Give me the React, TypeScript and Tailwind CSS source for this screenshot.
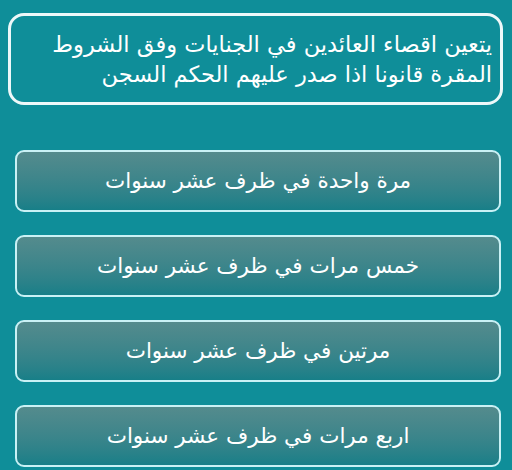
const answers = [
  'مرة واحدة في ظرف عشر سنوات',
  'خمس مرات في ظرف عشر سنوات',
  'مرتين في ظرف عشر سنوات',
  'اربع مرات في ظرف عشر سنوات',
]

export default function App() {
  return (
    <div
      dir="rtl"
      className="w-[512px] h-[470px] overflow-hidden bg-[#0f8e99] pt-[13px]"
      style={{ fontFamily: '"DejaVu Sans", "Noto Sans", sans-serif' }}
    >
      {/* Question */}
      <div className="mr-[9px] ml-[8px] h-[92px] rounded-[16px] border-[3px] border-[#eef8f9] pr-[8px] pl-[4px] flex items-center">
        <p className="text-white text-[22.5px] leading-[30px] text-right">
          يتعين اقصاء العائدين في الجنايات وفق الشروط المقرة قانونا اذا صدر عليهم الحكم السجن
        </p>
      </div>

      {/* Answers */}
      <div className="mt-[45px] mr-[11px] ml-[15px] flex flex-col gap-[23px]">
        {answers.map((a, i) => (
          <button
            key={i}
            className="h-[62px] rounded-[9px] border-2 border-[#c9f1f5] bg-gradient-to-b from-[#548b8d] to-[#177f88] text-white text-[21.5px] flex items-center justify-center"
          >
            {a}
          </button>
        ))}
      </div>
    </div>
  )
}
